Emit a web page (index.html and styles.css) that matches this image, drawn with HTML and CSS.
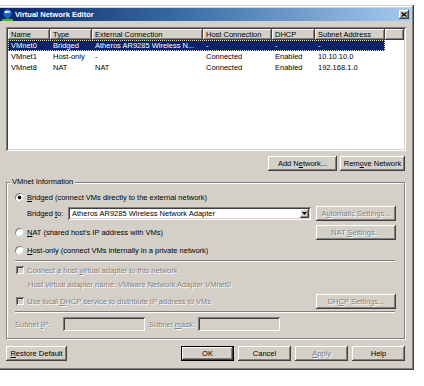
FILE: index.html
```html
<!DOCTYPE html>
<html lang="en">
<head>
    <meta charset="UTF-8">
    <meta name="viewport" content="width=device-width, initial-scale=1.0">
    <title>Virtual Network Editor</title>
    <link rel="stylesheet" href="styles.css">
</head>
<body>
    <div class="window">
        <div class="titlebar">
            <svg class="app-icon" width="11" height="12" viewBox="0 0 11 12">
                <rect x="4" y="8" width="3" height="2" fill="#2c7a2c"/>
                <rect x="0" y="10" width="11" height="2" fill="#3cb83c"/>
                <circle cx="5.5" cy="4.5" r="4.2" fill="#1d5fd0"/>
                <path d="M2 3 Q5.5 0 9 3 Q5.5 5 2 3 Z" fill="#bfe0ff"/>
                <circle cx="4" cy="3" r="1.2" fill="#fff"/>
            </svg>
            <span class="title">Virtual Network Editor</span>
            <span class="close-btn">
                <svg width="6" height="5" viewBox="0 0 6 5">
                    <path d="M0.5 0.5 L5.5 4.5 M5.5 0.5 L0.5 4.5" stroke="#000" stroke-width="1.3"/>
                </svg>
            </span>
        </div>

        <div class="client">
            <div class="listview">
                <div class="lv-head">
                    <span class="col c-name">Name</span>
                    <span class="col c-type">Type</span>
                    <span class="col c-ext">External Connection</span>
                    <span class="col c-host">Host Connection</span>
                    <span class="col c-dhcp">DHCP</span>
                    <span class="col c-subnet">Subnet Address</span>
                    <span class="col c-fill"></span>
                </div>
                <div class="lv-row selected">
                    <span class="c-name">VMnet0</span>
                    <span class="c-type">Bridged</span>
                    <span class="c-ext">Atheros AR9285 Wireless N...</span>
                    <span class="c-host">-</span>
                    <span class="c-dhcp">-</span>
                    <span class="c-subnet">-</span>
                </div>
                <div class="lv-row">
                    <span class="c-name">VMnet1</span>
                    <span class="c-type">Host-only</span>
                    <span class="c-ext">-</span>
                    <span class="c-host">Connected</span>
                    <span class="c-dhcp">Enabled</span>
                    <span class="c-subnet">10.10.10.0</span>
                </div>
                <div class="lv-row">
                    <span class="c-name">VMnet8</span>
                    <span class="c-type">NAT</span>
                    <span class="c-ext">NAT</span>
                    <span class="c-host">Connected</span>
                    <span class="c-dhcp">Enabled</span>
                    <span class="c-subnet">192.168.1.0</span>
                </div>
            </div>

            <div class="list-actions">
                <button class="btn btn-add">Add N<u>e</u>twork...</button>
                <button class="btn btn-remove">Rem<u>o</u>ve Network</button>
            </div>

            <fieldset class="group">
                <legend>VMnet Information</legend>

                <div class="row r-bridged">
                    <span class="radio checked"></span>
                    <span><u>B</u>ridged (connect VMs directly to the external network)</span>
                </div>

                <div class="row r-bridgeto">
                    <span class="bridge-label">Bridged <u>t</u>o:</span>
                    <div class="combo">
                        <span class="combo-text">Atheros AR9285 Wireless Network Adapter</span>
                        <span class="combo-arrow">
                            <svg width="5" height="3" viewBox="0 0 5 3"><path d="M0 0 H5 L2.5 3 Z" fill="#000"/></svg>
                        </span>
                    </div>
                    <button class="btn btn-side disabled">A<u>u</u>tomatic Settings...</button>
                </div>

                <div class="row r-nat">
                    <span class="radio"></span>
                    <span class="grow"><u>N</u>AT (shared host's IP address with VMs)</span>
                    <button class="btn btn-side disabled">NAT <u>S</u>ettings...</button>
                </div>

                <div class="row r-host">
                    <span class="radio"></span>
                    <span><u>H</u>ost-only (connect VMs internally in a private network)</span>
                </div>

                <div class="sep sep-1"></div>

                <div class="row r-connect dim">
                    <span class="check"></span>
                    <span>Connect a host <u>v</u>irtual adapter to this network</span>
                </div>

                <div class="row r-adapter dim">
                    <span>Host virtual adapter name: VMware Network Adapter VMnet0</span>
                </div>

                <div class="row r-dhcp dim">
                    <span class="check"></span>
                    <span class="grow">Use local <u>D</u>HCP service to distribute IP address to VMs</span>
                    <button class="btn btn-side disabled">DH<u>C</u>P Settings...</button>
                </div>

                <div class="sep sep-2"></div>

                <div class="row r-subnet dim">
                    <span class="subnet-label">Subnet <u>I</u>P:</span>
                    <span class="ipbox"><i>.</i><i>.</i><i>.</i></span>
                    <span class="mask-label">Subnet <u>m</u>ask:</span>
                    <span class="ipbox"><i>.</i><i>.</i><i>.</i></span>
                </div>
            </fieldset>

            <div class="footer">
                <button class="btn btn-restore"><u>R</u>estore Default</button>
                <div class="footer-right">
                    <button class="btn btn-foot btn-default">OK</button>
                    <button class="btn btn-foot">Cancel</button>
                    <button class="btn btn-foot disabled"><u>A</u>pply</button>
                    <button class="btn btn-foot">Help</button>
                </div>
            </div>
        </div>
    </div>
</body>
</html>
```

FILE: styles.css
```css
body {
    margin: 0;
    background: #fff;
    font-family: "Liberation Sans", Arial, sans-serif;
    font-size: 7.5px;
    color: #000;
}
u {
    text-decoration: underline;
}

/* window frame */
.window {
    width: 411px;
    margin: 5px 0 0 -3px;
    padding: 3px;
    background: #d4d0c8;
    box-shadow: inset -1px -1px #404040, inset 1px 1px #d4d0c8,
                inset -2px -2px #808080, inset 2px 2px #fff;
}
.titlebar {
    height: 13px;
    display: flex;
    align-items: center;
    padding-left: 2px;
    background: linear-gradient(to right, #0a246a, #3a6ea5 45%, #a6caf0);
}
.app-icon {
    display: block;
    margin-right: 2px;
}
.title {
    color: #fff;
    font-weight: bold;
    font-size: 7.5px;
}
.close-btn {
    margin-left: auto;
    margin-right: 2px;
    width: 10px;
    height: 9px;
    display: flex;
    align-items: center;
    justify-content: center;
    background: #d4d0c8;
    box-shadow: inset -1px -1px #404040, inset 1px 1px #fff, inset -2px -2px #808080;
}
.close-btn svg {
    display: block;
}

.client {
    padding: 6px 5px 6px 6px;
}

/* list view */
.listview {
    height: 124px;
    box-sizing: border-box;
    padding: 2px;
    background: #fff;
    box-shadow: inset 1px 1px #808080, inset -1px -1px #fff,
                inset 2px 2px #404040, inset -2px -2px #d4d0c8;
}
.lv-head {
    display: flex;
    height: 11px;
    background: #d4d0c8;
}
.lv-head .col {
    box-sizing: border-box;
    height: 11px;
    line-height: 11px;
    padding-left: 3px;
    box-shadow: inset -1px -1px #404040, inset 1px 1px #fff, inset -2px -2px #808080;
    white-space: nowrap;
}
.lv-head .c-fill {
    flex: 1;
}
.lv-row {
    display: flex;
    width: 377px;
    height: 11px;
    line-height: 11px;
}
.lv-row span {
    box-sizing: border-box;
    padding-left: 3px;
    white-space: nowrap;
    overflow: hidden;
}
.lv-row.selected {
    background: #0a246a;
    color: #fff;
    outline: 1px dotted #e8e4c0;
    outline-offset: -1px;
}
.c-name { width: 42px; }
.c-type { width: 42px; }
.c-ext { width: 111px; }
.c-host { width: 69px; }
.c-dhcp { width: 43px; }
.c-subnet { width: 70px; }

/* buttons */
.btn {
    box-sizing: border-box;
    height: 15px;
    padding: 0;
    border: none;
    background: #d4d0c8;
    font-family: inherit;
    font-size: 7.5px;
    color: #000;
    box-shadow: inset -1px -1px #404040, inset 1px 1px #fff,
                inset -2px -2px #808080, inset 2px 2px #d4d0c8;
}
.btn.disabled {
    color: #808080;
    text-shadow: 1px 1px 0 #fff;
}
.list-actions {
    display: flex;
    justify-content: flex-end;
    gap: 3px;
    margin-top: 5px;
    padding-right: 1px;
}
.btn-add { width: 69px; }
.btn-remove { width: 65px; }

/* group box */
.group {
    margin: 6px 1px 0 0;
    padding: 0 8px 6px 8px;
    border: 1px solid #808080;
    box-shadow: inset 1px 1px #fff, 1px 1px #fff;
}
.group legend {
    margin-left: -5px;
    padding: 0 2px;
    line-height: 10px;
    background: #d4d0c8;
}
.row {
    display: flex;
    align-items: center;
    white-space: nowrap;
}
.grow {
    flex: 1;
}
.r-bridged { height: 12px; margin-top: 4px; }
.r-bridgeto { height: 16px; margin-top: 2px; padding-left: 12px; }
.r-nat { height: 16px; margin-top: 3px; }
.r-host { height: 12px; margin-top: 4px; }
.sep-1 { margin-top: 4px; }
.r-connect { height: 12px; margin-top: 2px; }
.r-adapter { height: 12px; margin-top: 2px; padding-left: 13px; }
.r-dhcp { height: 16px; margin-top: 3px; }
.sep-2 { margin-top: 2px; }
.r-subnet { height: 16px; margin-top: 3px; }

.dim {
    color: #808080;
    text-shadow: 1px 1px 0 #fff;
}
.sep {
    height: 0;
    margin-right: 1px;
    border-top: 1px solid #808080;
    border-bottom: 1px solid #fff;
}

.radio {
    flex: none;
    width: 9px;
    height: 9px;
    margin-right: 3px;
    border-radius: 50%;
    background: #fff;
    box-shadow: inset 1px 1px #808080, inset -1px -1px #d4d0c8;
}
.radio.checked {
    background: radial-gradient(circle, #000 1.6px, #fff 2.2px);
}
.check {
    flex: none;
    width: 8px;
    height: 8px;
    margin: 0 3px 0 1px;
    background: #d4d0c8;
    box-shadow: inset 1px 1px #808080, inset -1px -1px #fff,
                inset 2px 2px #404040;
}

.bridge-label {
    width: 41px;
}
.combo {
    box-sizing: border-box;
    width: 243px;
    height: 13px;
    margin-right: 5px;
    padding: 2px;
    display: flex;
    align-items: center;
    background: #fff;
    box-shadow: inset 1px 1px #808080, inset -1px -1px #fff,
                inset 2px 2px #404040, inset -2px -2px #d4d0c8;
}
.combo-text {
    flex: 1;
    padding-left: 2px;
}
.combo-arrow {
    width: 9px;
    height: 9px;
    display: flex;
    align-items: center;
    justify-content: center;
    background: #d4d0c8;
    box-shadow: inset -1px -1px #404040, inset 1px 1px #fff, inset -2px -2px #808080;
}
.combo-arrow svg {
    display: block;
}
.btn-side {
    width: 80px;
    margin-right: 0;
}

.subnet-label {
    width: 48px;
}
.mask-label {
    width: 49px;
    padding-left: 4px;
}
.ipbox {
    box-sizing: border-box;
    width: 82px;
    height: 14px;
    display: flex;
    align-items: center;
    justify-content: space-evenly;
    background: #d4d0c8;
    box-shadow: inset 1px 1px #808080, inset -1px -1px #fff,
                inset 2px 2px #404040, inset -2px -2px #d4d0c8;
}
.ipbox i {
    font-style: normal;
}

/* bottom buttons */
.footer {
    display: flex;
    margin-top: 7px;
    padding-right: 1px;
}
.btn-restore {
    width: 61px;
}
.footer-right {
    display: flex;
    gap: 4px;
    margin-left: auto;
}
.btn-foot {
    width: 53px;
}
.btn-default {
    box-shadow: inset 0 0 0 1px #000, inset -2px -2px #404040, inset 2px 2px #fff,
                inset -3px -3px #808080;
}
```
